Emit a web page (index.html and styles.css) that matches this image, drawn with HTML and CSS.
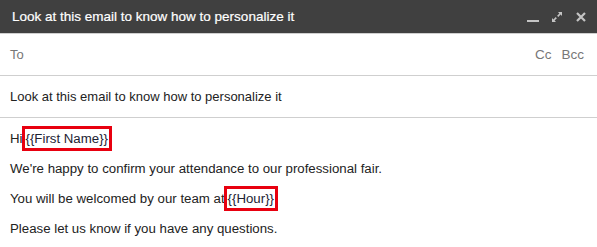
FILE: index.html
```html
<!DOCTYPE html>
<html>
<head>
<meta charset="utf-8">
<link rel="stylesheet" href="styles.css">
</head>
<body>
<div class="compose">
  <div class="titlebar">
    <span class="title">Look at this email to know how to personalize it</span>
    <div class="controls">
      <svg class="ic" width="12" height="12" viewBox="0 0 12 12"><rect x="0" y="9" width="12" height="2" fill="#c4c4c4"/></svg>
      <svg class="ic" width="12" height="12" viewBox="0 0 12 12"><g fill="#c4c4c4"><path d="M7 1h4v4l-1.4-1.4-2.3 2.3-1.2-1.2 2.3-2.3z"/><path d="M5 11H1V7l1.4 1.4 2.3-2.3 1.2 1.2-2.3 2.3z"/></g></svg>
      <svg class="ic" width="12" height="12" viewBox="0 0 12 12"><path d="M2 2l8 8M10 2l-8 8" stroke="#c4c4c4" stroke-width="2.2"/></svg>
    </div>
  </div>
  <div class="row to">
    <span class="label">To</span>
    <span class="cc"><span>Cc</span><span>Bcc</span></span>
  </div>
  <div class="row subject">Look at this email to know how to personalize it</div>
  <div class="body">
    <p>Hi<span class="tag">{{First Name}}</span></p>
    <p>We're happy to confirm your attendance to our professional fair.</p>
    <p>You will be welcomed by our team at<span class="tag">{{Hour}}</span></p>
    <p>Please let us know if you have any questions.</p>
  </div>
</div>
</body>
</html>
```
FILE: styles.css
```css
html, body { margin: 0; padding: 0; background: #fff; }
body { font-family: "Liberation Sans", Arial, sans-serif; }
.compose { width: 597px; }
.titlebar {
  height: 34px;
  background: #404040;
  display: flex;
  align-items: center;
  justify-content: space-between;
  padding: 0 10px 0 12px;
  box-sizing: border-box;
  border-bottom: 1px solid #cfcfcf;
}
.title { color: #fff; font-size: 13.5px; -webkit-text-stroke: 0.2px #fff; }
.controls { display: flex; gap: 12px; align-items: center; }
.ic { display: block; }
.row {
  height: 42px;
  box-sizing: border-box;
  border-bottom: 1px solid #cfcfcf;
  display: flex;
  align-items: center;
  padding: 0 10px;
  font-size: 13px;
}
.to { justify-content: space-between; color: #777; }
.cc { display: flex; gap: 10px; color: #777; padding-right: 3px; font-size: 13.5px; }
.subject { color: #222; }
.body { padding: 6px 10px 0; font-size: 13.25px; color: #222; }
.body p { margin: 0; height: 30px; line-height: 30px; }
.tag {
  display: inline-block;
  border: 3px solid #e8000f;
  line-height: 19px;
  padding: 0 1px;
  margin-left: -1px;
  color: #1d2233;
}
```
